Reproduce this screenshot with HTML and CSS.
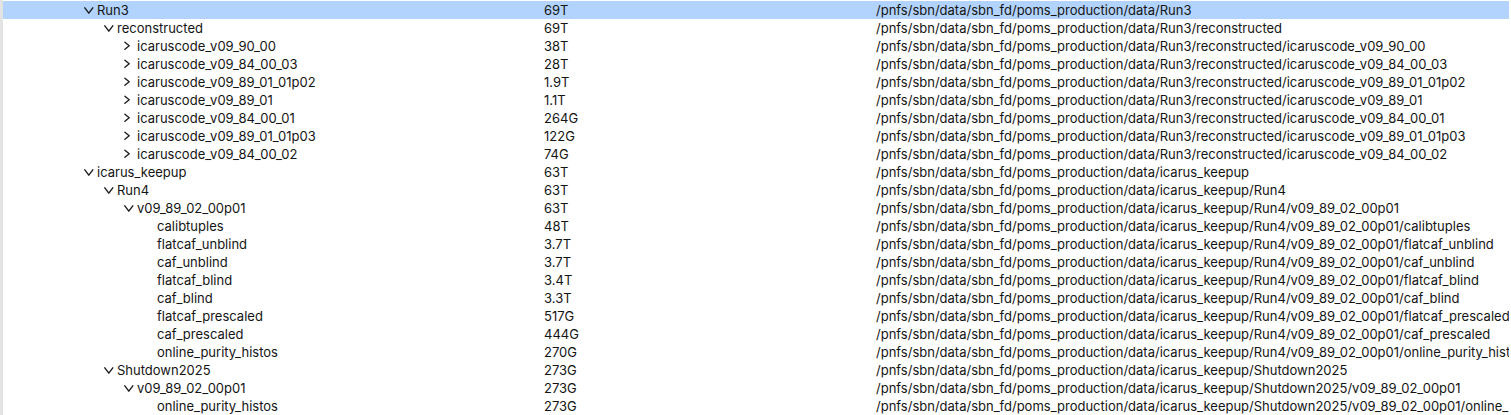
FILE: index.html
```html
<!DOCTYPE html>
<html>
<head>
<meta charset="utf-8">
<link rel="stylesheet" href="styles.css">
</head>
<body>
<div class="tree">
  <div class="row selected"><div class="name l0"><svg class="tw" viewBox="0 0 13 18"><polyline points="0.8,6.8 4.8,12.2 8.8,6.8"/></svg>Run3</div><div class="size">69T</div><div class="path">/pnfs/sbn/data/sbn_fd/poms_production/data/Run3</div></div>
  <div class="row"><div class="name l1"><svg class="tw" viewBox="0 0 13 18"><polyline points="0.8,6.8 4.8,12.2 8.8,6.8"/></svg>reconstructed</div><div class="size">69T</div><div class="path">/pnfs/sbn/data/sbn_fd/poms_production/data/Run3/reconstructed</div></div>
  <div class="row"><div class="name l2"><svg class="tw" viewBox="0 0 13 18"><polyline points="0.9,5.2 5.2,8.7 0.9,12.2"/></svg>icaruscode_v09_90_00</div><div class="size">38T</div><div class="path">/pnfs/sbn/data/sbn_fd/poms_production/data/Run3/reconstructed/icaruscode_v09_90_00</div></div>
  <div class="row"><div class="name l2"><svg class="tw" viewBox="0 0 13 18"><polyline points="0.9,5.2 5.2,8.7 0.9,12.2"/></svg>icaruscode_v09_84_00_03</div><div class="size">28T</div><div class="path">/pnfs/sbn/data/sbn_fd/poms_production/data/Run3/reconstructed/icaruscode_v09_84_00_03</div></div>
  <div class="row"><div class="name l2"><svg class="tw" viewBox="0 0 13 18"><polyline points="0.9,5.2 5.2,8.7 0.9,12.2"/></svg>icaruscode_v09_89_01_01p02</div><div class="size">1.9T</div><div class="path">/pnfs/sbn/data/sbn_fd/poms_production/data/Run3/reconstructed/icaruscode_v09_89_01_01p02</div></div>
  <div class="row"><div class="name l2"><svg class="tw" viewBox="0 0 13 18"><polyline points="0.9,5.2 5.2,8.7 0.9,12.2"/></svg>icaruscode_v09_89_01</div><div class="size">1.1T</div><div class="path">/pnfs/sbn/data/sbn_fd/poms_production/data/Run3/reconstructed/icaruscode_v09_89_01</div></div>
  <div class="row"><div class="name l2"><svg class="tw" viewBox="0 0 13 18"><polyline points="0.9,5.2 5.2,8.7 0.9,12.2"/></svg>icaruscode_v09_84_00_01</div><div class="size">264G</div><div class="path">/pnfs/sbn/data/sbn_fd/poms_production/data/Run3/reconstructed/icaruscode_v09_84_00_01</div></div>
  <div class="row"><div class="name l2"><svg class="tw" viewBox="0 0 13 18"><polyline points="0.9,5.2 5.2,8.7 0.9,12.2"/></svg>icaruscode_v09_89_01_01p03</div><div class="size">122G</div><div class="path">/pnfs/sbn/data/sbn_fd/poms_production/data/Run3/reconstructed/icaruscode_v09_89_01_01p03</div></div>
  <div class="row"><div class="name l2"><svg class="tw" viewBox="0 0 13 18"><polyline points="0.9,5.2 5.2,8.7 0.9,12.2"/></svg>icaruscode_v09_84_00_02</div><div class="size">74G</div><div class="path">/pnfs/sbn/data/sbn_fd/poms_production/data/Run3/reconstructed/icaruscode_v09_84_00_02</div></div>
  <div class="row"><div class="name l0"><svg class="tw" viewBox="0 0 13 18"><polyline points="0.8,6.8 4.8,12.2 8.8,6.8"/></svg>icarus_keepup</div><div class="size">63T</div><div class="path">/pnfs/sbn/data/sbn_fd/poms_production/data/icarus_keepup</div></div>
  <div class="row"><div class="name l1"><svg class="tw" viewBox="0 0 13 18"><polyline points="0.8,6.8 4.8,12.2 8.8,6.8"/></svg>Run4</div><div class="size">63T</div><div class="path">/pnfs/sbn/data/sbn_fd/poms_production/data/icarus_keepup/Run4</div></div>
  <div class="row"><div class="name l2"><svg class="tw" viewBox="0 0 13 18"><polyline points="0.8,6.8 4.8,12.2 8.8,6.8"/></svg>v09_89_02_00p01</div><div class="size">63T</div><div class="path">/pnfs/sbn/data/sbn_fd/poms_production/data/icarus_keepup/Run4/v09_89_02_00p01</div></div>
  <div class="row"><div class="name l3"><span class="tw"></span>calibtuples</div><div class="size">48T</div><div class="path">/pnfs/sbn/data/sbn_fd/poms_production/data/icarus_keepup/Run4/v09_89_02_00p01/calibtuples</div></div>
  <div class="row"><div class="name l3"><span class="tw"></span>flatcaf_unblind</div><div class="size">3.7T</div><div class="path">/pnfs/sbn/data/sbn_fd/poms_production/data/icarus_keepup/Run4/v09_89_02_00p01/flatcaf_unblind</div></div>
  <div class="row"><div class="name l3"><span class="tw"></span>caf_unblind</div><div class="size">3.7T</div><div class="path">/pnfs/sbn/data/sbn_fd/poms_production/data/icarus_keepup/Run4/v09_89_02_00p01/caf_unblind</div></div>
  <div class="row"><div class="name l3"><span class="tw"></span>flatcaf_blind</div><div class="size">3.4T</div><div class="path">/pnfs/sbn/data/sbn_fd/poms_production/data/icarus_keepup/Run4/v09_89_02_00p01/flatcaf_blind</div></div>
  <div class="row"><div class="name l3"><span class="tw"></span>caf_blind</div><div class="size">3.3T</div><div class="path">/pnfs/sbn/data/sbn_fd/poms_production/data/icarus_keepup/Run4/v09_89_02_00p01/caf_blind</div></div>
  <div class="row"><div class="name l3"><span class="tw"></span>flatcaf_prescaled</div><div class="size">517G</div><div class="path">/pnfs/sbn/data/sbn_fd/poms_production/data/icarus_keepup/Run4/v09_89_02_00p01/flatcaf_prescaled</div></div>
  <div class="row"><div class="name l3"><span class="tw"></span>caf_prescaled</div><div class="size">444G</div><div class="path">/pnfs/sbn/data/sbn_fd/poms_production/data/icarus_keepup/Run4/v09_89_02_00p01/caf_prescaled</div></div>
  <div class="row"><div class="name l3"><span class="tw"></span>online_purity_histos</div><div class="size">270G</div><div class="path">/pnfs/sbn/data/sbn_fd/poms_production/data/icarus_keepup/Run4/v09_89_02_00p01/online_purity_histos</div></div>
  <div class="row"><div class="name l1"><svg class="tw" viewBox="0 0 13 18"><polyline points="0.8,6.8 4.8,12.2 8.8,6.8"/></svg>Shutdown2025</div><div class="size">273G</div><div class="path">/pnfs/sbn/data/sbn_fd/poms_production/data/icarus_keepup/Shutdown2025</div></div>
  <div class="row"><div class="name l2"><svg class="tw" viewBox="0 0 13 18"><polyline points="0.8,6.8 4.8,12.2 8.8,6.8"/></svg>v09_89_02_00p01</div><div class="size">273G</div><div class="path">/pnfs/sbn/data/sbn_fd/poms_production/data/icarus_keepup/Shutdown2025/v09_89_02_00p01</div></div>
  <div class="row"><div class="name l3"><span class="tw"></span>online_purity_histos</div><div class="size">273G</div><div class="path">/pnfs/sbn/data/sbn_fd/poms_production/data/icarus_keepup/Shutdown2025/v09_89_02_00p01/online_purity_histos</div></div>
</div>
</body>
</html>
```
FILE: styles.css
```css
html, body {
  margin: 0;
  padding: 0;
  background: #ffffff;
  height: 100%;
  overflow: hidden;
}
.tree {
  box-sizing: border-box;
  height: 415px;
  border-left: 3px solid #e3e3e3;
  padding-top: 1px;
  padding-right: 2px;
  font-family: "Inter", "Liberation Sans", sans-serif;
  font-size: 13px;
  color: #141414;
  overflow: hidden;
}
.row {
  display: grid;
  grid-template-columns: 541px 332px 1fr;
  height: 18px;
  line-height: 18px;
  white-space: nowrap;
}
.row.selected {
  background: #b2d3fd;
}
.name, .size, .path {
  overflow: hidden;
}
.name {
  display: flex;
  align-items: center;
}
.l0 { padding-left: 81px; }
.l1 { padding-left: 101px; }
.l2 { padding-left: 121px; }
.l3 { padding-left: 141px; }
.tw {
  flex: none;
  display: block;
  width: 13px;
  height: 18px;
}
.tw polyline {
  fill: none;
  stroke: #1e1e1e;
  stroke-width: 1.4;
  stroke-linecap: round;
  stroke-linejoin: round;
}
```
